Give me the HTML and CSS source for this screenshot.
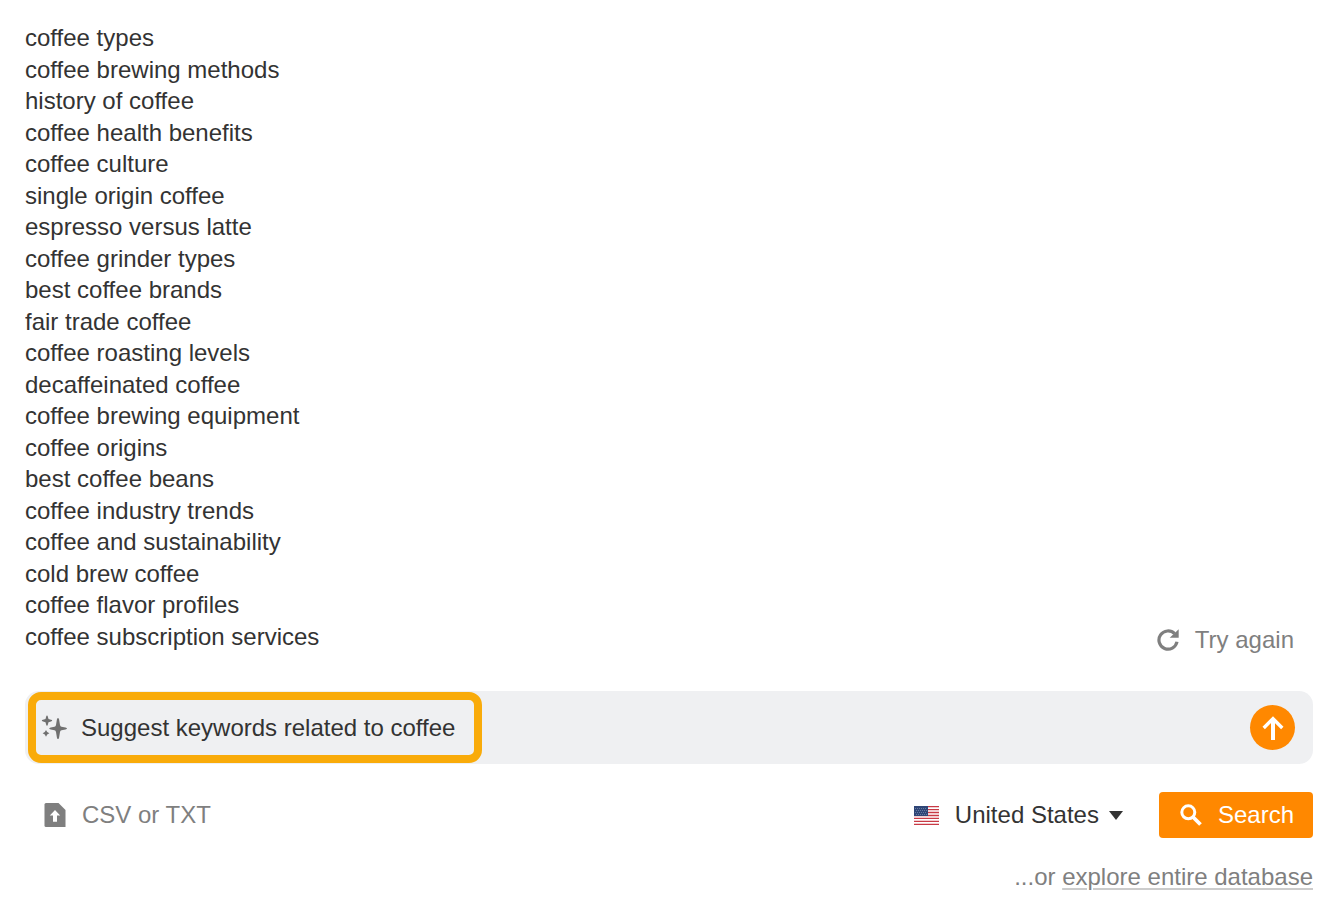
FILE: index.html
```html
<!DOCTYPE html>
<html lang="en">

<head>
    <meta charset="UTF-8">
    <meta name="viewport" content="width=device-width, initial-scale=1.0">
    <title>Keywords</title>
    <link rel="stylesheet" href="styles.css">
</head>

<body>
    <form class="explorer">
        <textarea class="keywords" rows="20" aria-label="Keywords" spellcheck="false">
coffee types
coffee brewing methods
history of coffee
coffee health benefits
coffee culture
single origin coffee
espresso versus latte
coffee grinder types
best coffee brands
fair trade coffee
coffee roasting levels
decaffeinated coffee
coffee brewing equipment
coffee origins
best coffee beans
coffee industry trends
coffee and sustainability
cold brew coffee
coffee flavor profiles
coffee subscription services</textarea>

        <button type="button" class="retry">
            <svg width="22" height="22" viewBox="0 0 22 22" fill="none">
                <path d="M20 12.800A9.100 9.100 0 1 1 17.600 4.700" stroke="currentColor" stroke-width="3.200" />
                <path d="M21.700 .2V8.800H12.700Z" fill="currentColor" />
            </svg>
            Try again
        </button>

        <div class="suggest">
            <label class="suggest-icon" for="prompt">
                <svg width="26" height="26" viewBox="0 0 26 26" fill="currentColor">
                    <path d="M17 3Q17.900 3 18.100 4.500L19 10Q19.300 11.500 20.500 11.800L24.500 12.600Q26 12.900 26 13.500Q26 14.100 24.500 14.400L20.500 15.200Q19.300 15.500 19 17L18.100 22.500Q17.900 24 17 24Q16.100 24 15.900 22.500L15 17Q14.700 15.500 13.500 15.200L9.700 14.400Q8.200 14.100 8.200 13.500Q8.200 12.900 9.700 12.600L13.500 11.800Q14.700 11.500 15 10L15.900 4.500Q16.100 3 17 3Z" />
                    <path d="M6 .5Q6.600 .5 6.800 1.500L7.500 4L10 4.800Q11.200 5.100 11.200 5.600Q11.200 6.100 10 6.400L7.500 7.200L6.800 9.700Q6.600 10.700 6 10.700Q5.400 10.700 5.200 9.700L4.500 7.200L2 6.400Q.8 6.100 .8 5.600Q.8 5.100 2 4.800L4.500 4L5.200 1.500Q5.400 .5 6 .5Z" />
                    <path d="M5 15L6.200 17.100L8.400 18.300L6.200 19.500L5 21.700L3.800 19.500L1.600 18.300L3.800 17.100Z" />
                </svg>
            </label>
            <input type="text" id="prompt" class="prompt" value="Suggest keywords related to coffee" aria-label="Suggest keywords">
            <button type="submit" class="send" aria-label="Send">
                <svg width="22" height="24" viewBox="0 0 22 24" fill="none" stroke="currentColor" stroke-width="4">
                    <path d="M11 24V3" />
                    <path d="M1.700 12L11 2.700L20.300 12" stroke-width="3.400" />
                </svg>
            </button>
            <div class="highlight"></div>
        </div>

        <div class="actions">
            <button type="button" class="upload">
                <svg width="22" height="24" viewBox="0 0 22 24">
                    <path d="M2 0H14.500L21.500 7V24H2Q.5 24 .5 22.500V1.500Q.5 0 2 0Z" fill="currentColor" />
                    <path d="M11 7L16.200 12.500H13V18.800H9V12.500H5.800Z" fill="#fff" />
                </svg>
                CSV or TXT
            </button>
            <button type="button" class="country">
                <svg width="25" height="19" viewBox="0 0 25 19">
                    <path fill="#fff" d="M0 0H25V19H0Z" />
                    <path stroke="#c83a45" stroke-width="1.300" d="M0 .7H25M0 3.600H25M0 6.500H25M0 9.500H25M0 12.400H25M0 15.300H25M0 18.300H25" />
                    <path fill="#2f4677" d="M0 0H14V10H0Z" />
                    <path stroke="#6679a0" stroke-dasharray="1 1" d="M1 2.500H13M2 4.500H13M1 6.500H13M2 8.500H13" />
                </svg>
                United States
                <svg class="caret" width="14" height="9" viewBox="0 0 14 9">
                    <path d="M0 0H14L7 9Z" fill="currentColor" />
                </svg>
            </button>
            <button type="submit" class="search">
                <svg width="22" height="22" viewBox="0 0 22 22" fill="none" stroke="currentColor">
                    <circle cx="8.300" cy="8.300" r="6.500" stroke-width="3" />
                    <path d="M13 13L20.500 20.500" stroke-width="3.800" />
                </svg>
                Search
            </button>
        </div>

        <p class="more">...or <a href="#">explore entire database</a></p>
    </form>
</body>

</html>
```
FILE: styles.css
```css
body {
    margin: 0;
    background-color: #fff;
    color: #333;
    font-family: "Liberation Sans", Arial, sans-serif;
    font-size: 24px;
}

button,
input,
textarea {
    margin: 0;
    padding: 0;
    border: 0;
    background: none;
    color: inherit;
    font: inherit;
}

button {
    display: flex;
    align-items: center;
    cursor: pointer;
}

svg {
    display: block;
    flex: none;
}

.explorer {
    display: flex;
    flex-direction: column;
    padding: 22px 18px 24px 25px;
}

.keywords {
    width: 100%;
    line-height: 1.3125;
    resize: none;
    overflow: hidden;
    outline: none;
}

.retry {
    align-self: flex-end;
    gap: 16px;
    height: 32px;
    margin: -28px 19px 0 0;
    color: #7f7f7f;
    z-index: 1;
}

.suggest {
    position: relative;
    display: flex;
    align-items: center;
    height: 73px;
    margin-top: 35px;
    padding: 0 18px 0 16px;
    border-radius: 14px;
    background-color: #eff0f2;
}

.suggest-icon {
    margin-right: 14px;
    color: #707070;
}

.prompt {
    flex: 1;
    min-width: 0;
    outline: none;
}

.send {
    justify-content: center;
    width: 45px;
    height: 45px;
    border-radius: 50%;
    background-color: #ff8800;
    color: #fff;
}

.highlight {
    position: absolute;
    top: 1px;
    left: 3px;
    width: 438px;
    height: 55px;
    border: 8px solid #f9ab0a;
    border-radius: 13px;
    pointer-events: none;
}

.actions {
    display: flex;
    align-items: center;
    margin-top: 28px;
}

.upload {
    gap: 16px;
    margin-right: auto;
    padding-left: 19px;
    color: #7f7f7f;
}

.country {
    gap: 16px;
}

.caret {
    margin-left: -6px;
}

.search {
    gap: 16px;
    height: 46px;
    margin-left: 36px;
    padding: 0 19px 0 21px;
    border-radius: 4px;
    background-color: #ff8800;
    color: #fff;
}

.more {
    margin: 24px 0 0;
    line-height: 30px;
    color: #7f7f7f;
    text-align: right;
}

.more a {
    color: inherit;
    text-decoration: underline 2px #ccc;
    text-underline-offset: 3px;
}
```
